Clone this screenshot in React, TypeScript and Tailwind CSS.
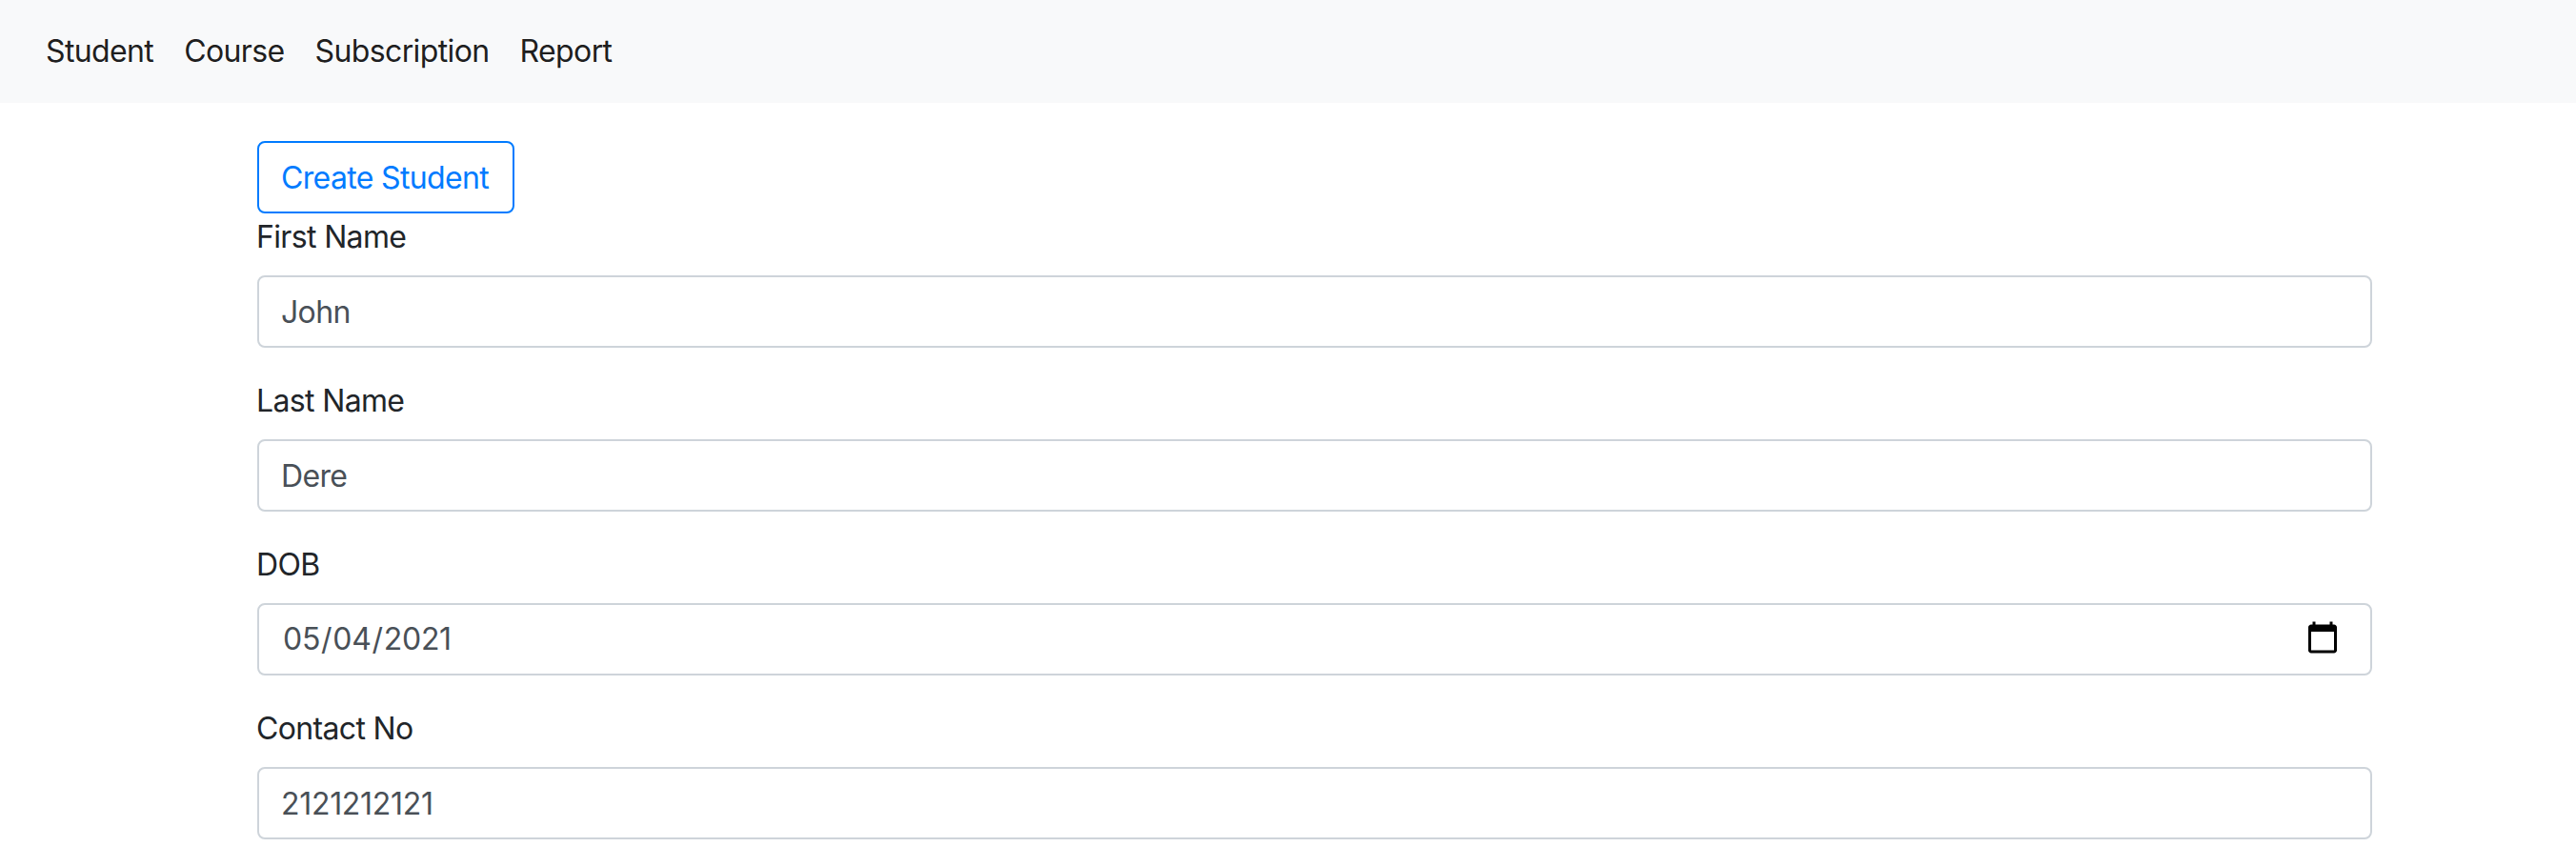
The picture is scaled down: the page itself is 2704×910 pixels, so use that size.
import { useState } from 'react'

const navItems = ['Student', 'Course', 'Subscription', 'Report']

const inputClass =
  'block w-full h-[76px] pr-6 rounded-lg border-2 border-[#ced4da] bg-white text-[#495057] outline-none [&::-webkit-calendar-picker-indicator]:w-[38px] [&::-webkit-calendar-picker-indicator]:h-[38px] [&::-webkit-calendar-picker-indicator]:p-0 [&::-webkit-calendar-picker-indicator]:ml-0 [&::-webkit-calendar-picker-indicator]:mr-[7px] [&::-webkit-calendar-picker-indicator]:mb-[2px]'

function Field({ label, value, type = 'text', digits = false }: { label: string; value: string; type?: string; digits?: boolean }) {
  const [val, setVal] = useState(value)
  return (
    <div className="mb-8">
      <label className="block -ml-px mb-4 leading-[48px] text-[#212529]">{label}</label>
      <input
        type={type}
        value={val}
        onChange={e => setVal(e.target.value)}
        className={`${inputClass} ${digits ? 'tracking-[-0.3px]' : ''} ${type === 'date' ? 'pl-6' : 'pl-[23px]'}`}
      />
    </div>
  )
}

export default function App() {
  return (
    <div className="min-h-[910px] overflow-hidden bg-white font-['Inter',sans-serif] text-[32px] tracking-[-0.65px]">
      <nav className="flex items-center h-[108px] px-8 bg-[#f8f9fa] tracking-[-0.62px]">
        {navItems.map(item => (
          <a key={item} href="#" className="px-4 text-black/90">
            {item}
          </a>
        ))}
      </nav>

      <div className="w-[2220px] ml-[270px] pt-10">
        <button className="block h-[76px] mb-px pl-[23px] pr-[25px] pt-[2px] rounded-lg border-2 border-[#007bff] text-[#007bff]">
          Create Student
        </button>
        <Field label="First Name" value="John" />
        <Field label="Last Name" value="Dere" />
        <Field label="DOB" value="2021-05-04" type="date" digits />
        <Field label="Contact No" value="2121212121" digits />
      </div>
    </div>
  )
}
